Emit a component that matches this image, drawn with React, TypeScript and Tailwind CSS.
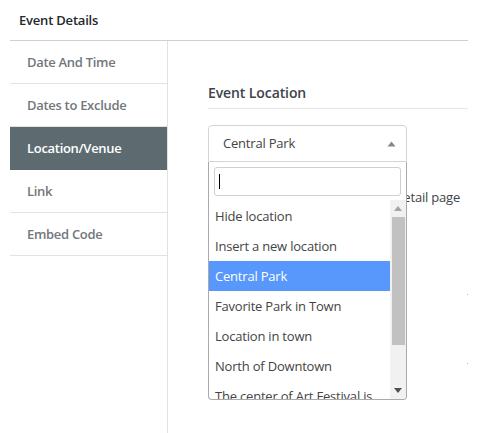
import React from "react";

const navItems = ["Date And Time", "Dates to Exclude", "Location/Venue", "Link", "Embed Code"];
const options = [
  "Hide location",
  "Insert a new location",
  "Central Park",
  "Favorite Park in Town",
  "Location in town",
  "North of Downtown",
  "The center of Art Festival is",
];

export default function App() {
  return (
    <div
      className="w-[489px] h-[433px] bg-white overflow-hidden pl-[10px] pr-[21px]"
      style={{ fontFamily: '"Open Sans", "Noto Sans", sans-serif' }}
    >
      <div className="h-[41px] border-b border-[#cfcfcf] flex items-center pt-[2px] pl-[9px] text-[13px] font-semibold text-[#23282d] tracking-[-0.2px]">
        Event Details
      </div>
      <div className="flex">
        <div className="w-[157px] shrink-0">
          {navItems.map((n, i) => (
            <div
              key={n}
              className={
                i === 2
                  ? "h-[43px] flex items-center pt-[1px] pl-[17px] text-[13px] font-semibold tracking-[-0.3px] text-white bg-[#5d6b71]"
                  : "h-[43px] flex items-center pt-[1px] pl-[17px] text-[13px] font-semibold tracking-[-0.3px] text-[#72777c] border-b border-[#e2e2e2]"
              }
            >
              {n}
            </div>
          ))}
        </div>
        <div className="flex-1 border-l border-[#e2e2e2] min-h-[392px] pl-[40px]">
          <div className="mt-[42px] pb-[5px] border-b border-[#e6e6e6] text-[14px] font-semibold text-[#3c434a] tracking-[-0.1px] leading-[20px]">
            Event Location
          </div>
          <div className="relative mt-[16px] w-[199px]">
            <div className="h-[37px] border border-[#d4d4d4] rounded-t-[4px] flex items-center justify-between pl-[14px] pr-[10px] text-[13px] text-[#444] tracking-[-0.2px]">
              <span>Central Park</span>
              <svg width="9" height="6" viewBox="0 0 9 6">
                <path d="M0.5 5.5 L4.5 0.5 L8.5 5.5 Z" fill="#888" />
              </svg>
            </div>
            <div className="absolute left-0 top-[37px] w-[199px] h-[238px] bg-white border border-t-0 border-[#aaa] rounded-b-[4px] z-10 flex flex-col overflow-hidden">
              <div className="px-[5px] pt-[5px] pb-[4px]">
                <div className="h-[29px] border border-[#cfcfcf] rounded-[3px] flex items-center pl-[4px]">
                  <div className="w-px h-[15px] bg-black" />
                </div>
              </div>
              <div className="flex flex-1 min-h-0">
                <div className="flex-1 overflow-hidden pt-[1px]">
                  {options.map((o, i) => (
                    <div
                      key={o}
                      className={
                        i === 2
                          ? "h-[30px] flex items-center pt-[1px] pl-[6px] text-[13px] whitespace-nowrap tracking-[-0.2px] bg-[#5897fb] text-white"
                          : "h-[30px] flex items-center pt-[1px] pl-[6px] text-[13px] whitespace-nowrap tracking-[-0.2px] text-[#444]"
                      }
                    >
                      {o}
                    </div>
                  ))}
                </div>
                <div className="w-[16px] bg-[#f1f1f1] flex flex-col items-center">
                  <div className="h-[17px] flex items-center justify-center">
                    <svg width="8" height="5" viewBox="0 0 8 5">
                      <path d="M0 5 L4 0 L8 5 Z" fill="#a3a3a3" />
                    </svg>
                  </div>
                  <div className="w-[13px] h-[128px] bg-[#c1c1c1]" />
                  <div className="flex-1" />
                  <div className="h-[17px] flex items-center justify-center">
                    <svg width="8" height="5" viewBox="0 0 8 5">
                      <path d="M0 0 L4 5 L8 0 Z" fill="#505050" />
                    </svg>
                  </div>
                </div>
              </div>
            </div>
          </div>
          <div className="mt-[26px] pr-[8px] text-right text-[13px] text-[#3c434a] tracking-[-0.2px] leading-[18px] whitespace-nowrap overflow-hidden">
            Show location in event detail page
          </div>
          <div className="mt-[88px] flex justify-end">
            <div className="w-px h-px bg-[#bbb]" />
          </div>
          <div className="mt-[68px] flex justify-end">
            <div className="w-px h-px bg-[#bbb]" />
          </div>
        </div>
      </div>
    </div>
  );
}
